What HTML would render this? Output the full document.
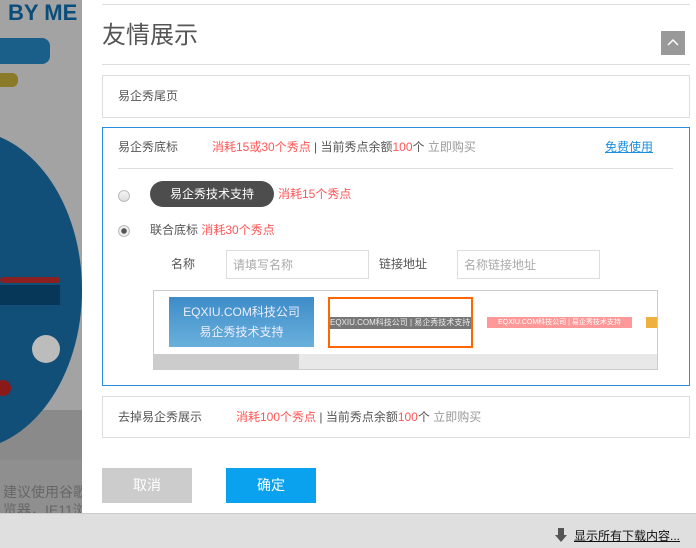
<!DOCTYPE html>
<html><head><meta charset="utf-8"><style>
*{margin:0;padding:0;box-sizing:border-box}
body{width:696px;height:548px;overflow:hidden;position:relative;background:#fff;font-family:"Liberation Sans","Noto Sans CJK SC",sans-serif;font-size:12px;color:#555}
.a{position:absolute}
.red{color:#f55}
.box{position:absolute;border:1px solid #ddd;background:#fff}
.row{position:absolute;white-space:nowrap;line-height:16px}
</style></head><body>
<div class="a" style="left:0;top:0;width:82px;height:513px;background:#a3a3a3;overflow:hidden">
 <div class="a" style="left:0;top:410px;width:82px;height:50px;background:#8a8a8a"></div>
 <div class="a" style="left:0;top:460px;width:82px;height:53px;background:#8f8f8f"></div>
 <div class="a" style="left:8px;top:0;font-size:22px;font-weight:bold;color:#0b4d7a;white-space:nowrap">BY ME</div>
 <div class="a" style="left:-10px;top:38px;width:60px;height:26px;background:#1a5e8a;border-radius:8px"></div>
 <div class="a" style="left:-10px;top:73px;width:28px;height:14px;background:#8a7a2a;border-radius:6px"></div>
 <div class="a" style="left:-150px;top:130px;width:232px;height:320px;background:#124f78;border-radius:50%"></div>
 <div class="a" style="left:-10px;top:285px;width:70px;height:20px;background:#063658"></div>
 <div class="a" style="left:0;top:277px;width:60px;height:6px;background:#8a2020;border-radius:3px"></div>
 <div class="a" style="left:32px;top:335px;width:28px;height:28px;background:#bcbcbc;border-radius:50%"></div>
 <div class="a" style="left:-5px;top:380px;width:16px;height:16px;background:#8a1a1a;border-radius:50%"></div>
 <div class="a" style="left:3px;top:483px;font-size:14px;color:#666;white-space:nowrap;line-height:18px">建议使用谷歌<br>览器，IE11浏</div>
</div>
<div class="a" style="left:102px;top:4px;width:588px;height:1px;background:#ddd"></div>
<div class="a" style="left:102px;top:19px;font-size:24px;color:#555;line-height:34px">友情展示</div>
<div class="a" style="left:661px;top:31px;width:24px;height:24px;background:#999">
 <svg width="24" height="24"><path d="M7 14 L12 9 L17 14" stroke="#fff" stroke-width="1.5" fill="none"/></svg></div>
<div class="a" style="left:102px;top:64px;width:588px;height:1px;background:#ddd"></div>
<div class="box" style="left:102px;top:75px;width:588px;height:43px"></div>
<div class="row" style="left:118px;top:88px">易企秀尾页</div>
<div class="box" style="left:102px;top:127px;width:588px;height:259px;border-color:#2a8de0"></div>
<div class="row" style="left:118px;top:139px">易企秀底标</div>
<div class="row" style="left:212px;top:139px"><span class="red">消耗15或30个秀点</span> | 当前秀点余额<span class="red">100</span>个 <span style="color:#999">立即购买</span></div>
<div class="row" style="left:605px;top:139px;color:#1a8ee0;text-decoration:underline">免费使用</div>
<div class="a" style="left:118px;top:168px;width:555px;height:1px;background:#ddd"></div>
<div class="a" style="left:118px;top:190px;width:12px;height:12px;border-radius:50%;border:1px solid #bbb;background:linear-gradient(#f5f5f5,#ddd)"></div>
<div class="a" style="left:150px;top:181px;width:124px;height:26px;border-radius:13px;background:#4d4d4d;color:#fff;text-align:center;line-height:26px">易企秀技术支持</div>
<div class="row" style="left:278px;top:186px" ><span class="red">消耗15个秀点</span></div>
<div class="a" style="left:118px;top:225px;width:12px;height:12px;border-radius:50%;border:1px solid #bbb;background:radial-gradient(#555 0 2.5px,#eee 3px)"></div>
<div class="row" style="left:150px;top:222px">联合底标 <span class="red">消耗30个秀点</span></div>
<div class="row" style="left:171px;top:256px">名称</div>
<div class="box" style="left:226px;top:250px;width:143px;height:29px"></div>
<div class="row" style="left:233px;top:257px;color:#aaa">请填写名称</div>
<div class="row" style="left:379px;top:256px">链接地址</div>
<div class="box" style="left:457px;top:250px;width:143px;height:29px"></div>
<div class="row" style="left:464px;top:257px;color:#aaa">名称链接地址</div>
<div class="box" style="left:153px;top:290px;width:505px;height:80px;border-color:#ccc;overflow:hidden">
 <div class="a" style="left:15px;top:6px;width:145px;height:50px;background:linear-gradient(#3d8cc8,#6ab0dc);color:#eef;font-size:12px;text-align:center;line-height:20px;padding-top:5px">EQXIU.COM科技公司<br>易企秀技术支持</div>
 <div class="a" style="left:174px;top:6px;width:145px;height:51px;border:2px solid #f60"></div>
 <div class="a" style="left:176px;top:26px;width:141px;height:12px;background:#777;color:#eee;font-size:8px;line-height:12px;white-space:nowrap">EQXIU.COM科技公司 | 易企秀技术支持</div>
 <div class="a" style="left:333px;top:26px;width:145px;height:11px;background:#f99;color:#fff;font-size:7px;line-height:11px;text-align:center;white-space:nowrap">EQXIU.COM科技公司 | 易企秀技术支持</div>
 <div class="a" style="left:492px;top:26px;width:12px;height:11px;background:#f0b040"></div>
 <div class="a" style="left:0;top:63px;width:505px;height:16px;background:#e8e8e8"></div>
 <div class="a" style="left:0;top:63px;width:145px;height:16px;background:#ccc"></div>
</div>
<div class="box" style="left:102px;top:396px;width:588px;height:42px"></div>
<div class="row" style="left:118px;top:409px">去掉易企秀展示</div>
<div class="row" style="left:236px;top:409px"><span class="red">消耗100个秀点</span> | 当前秀点余额<span class="red">100</span>个 <span style="color:#999">立即购买</span></div>
<div class="a" style="left:102px;top:468px;width:90px;height:35px;background:#ccc;color:#fff;text-align:center;line-height:35px;font-size:14px">取消</div>
<div class="a" style="left:226px;top:468px;width:90px;height:35px;background:#0aa2ee;color:#fff;text-align:center;line-height:35px;font-size:14px">确定</div>
<div class="a" style="left:0;top:513px;width:696px;height:35px;background:#dfdfdf;border-top:1px solid #ccc"></div>
<svg class="a" style="left:555px;top:528px" width="12" height="14"><path d="M3 0h6v7h3l-6 7-6-7h3z" fill="#555"/></svg>
<div class="row" style="left:574px;top:528px;color:#111;text-decoration:underline">显示所有下载内容...</div>
</body></html>
